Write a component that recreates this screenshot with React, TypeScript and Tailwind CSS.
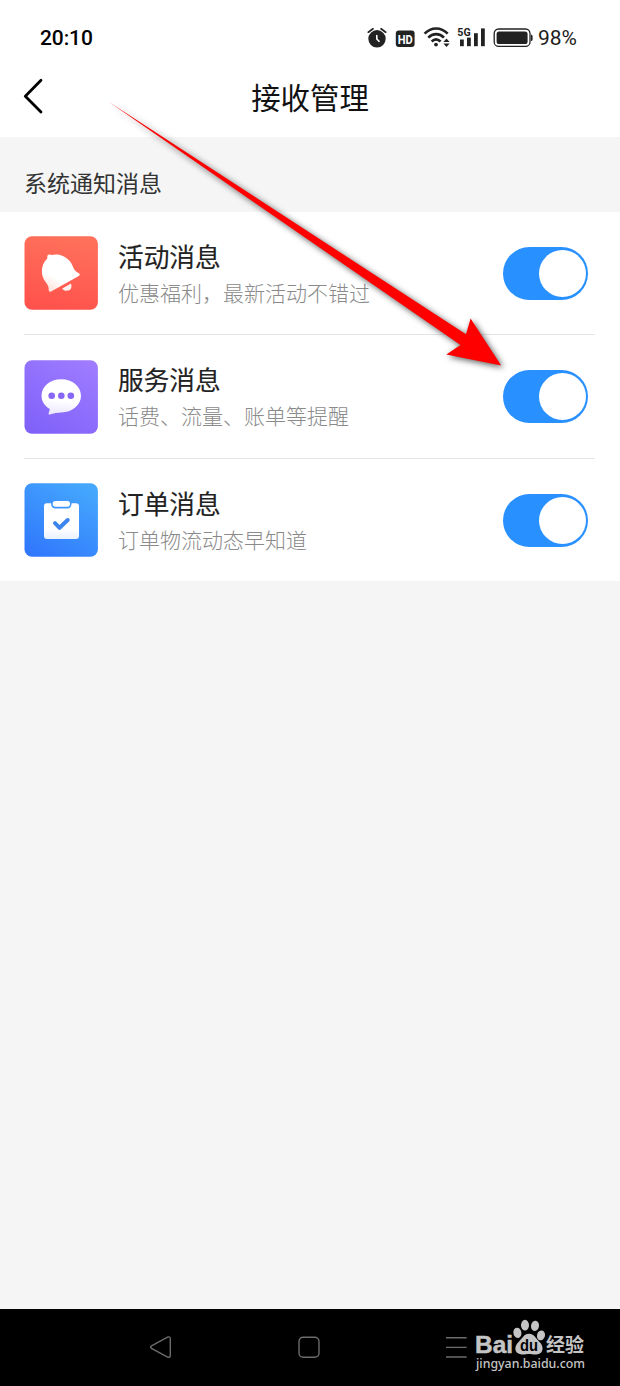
import { useState } from 'react';
import type { ReactNode } from 'react';

type MessageItem = {
  id: string;
  title: string;
  desc: string;
  icon: ReactNode;
};

function BellIcon() {
  return (
    <svg viewBox="0 0 74 74" className="w-[74px] h-[74px] shrink-0">
      <defs>
        <linearGradient id="bell-bg" x1="0.6" y1="0" x2="0.4" y2="1">
          <stop offset="0" stopColor="#ff715b" />
          <stop offset="1" stopColor="#ff524c" />
        </linearGradient>
        <linearGradient id="bell-fg" x1="0.6" y1="0.2" x2="0.2" y2="0.9">
          <stop offset="0" stopColor="#fff" />
          <stop offset="0.6" stopColor="#fff" />
          <stop offset="1" stopColor="#ffe6e2" />
        </linearGradient>
      </defs>
      <rect x="0.5" y="0.3" width="73.4" height="73.4" rx="7.5" fill="url(#bell-bg)" />
      <path
        d="M23.3 20.2C23.2 18.5 26.3 17.7 27.7 19.1C36 16.9 44.8 21.6 48.3 29.2C50 32.9 50.7 34.8 53.6 36.5L55.3 37.6C56.1 38.4 55.7 39.4 54.8 39.9L27.1 55.4C25.8 56.1 24.6 55.4 24.7 53.9C24.9 50.2 23.4 48.3 21 45.2C16.2 38.6 16.9 28.2 23.3 22.4Z"
        fill="url(#bell-fg)"
      />
      <path d="M38.3 52.4L47 47.4C48.3 51.8 46.6 54.4 43.6 54.6C41.3 54.9 39.2 54.3 38.3 52.4Z" fill="#fff1ef" />
    </svg>
  );
}

function ChatIcon() {
  return (
    <svg viewBox="0 0 74 74" className="w-[74px] h-[74px] shrink-0">
      <defs>
        <linearGradient id="chat-bg" x1="0.8" y1="0" x2="0.2" y2="1">
          <stop offset="0" stopColor="#9e7bff" />
          <stop offset="1" stopColor="#8062fa" />
        </linearGradient>
        <linearGradient id="chat-fg" x1="0.5" y1="0" x2="0.4" y2="1">
          <stop offset="0.6" stopColor="#fff" />
          <stop offset="1" stopColor="#ebe6ff" />
        </linearGradient>
      </defs>
      <rect x="0.5" y="0.3" width="73.4" height="73.4" rx="7.5" fill="url(#chat-bg)" />
      <path
        d="M37.2 19.3C48.4 19.3 57 26.6 57 35.8C57 45.1 48.3 52.5 37.2 52.5C33.6 52.5 29.8 53.2 25.7 54.5C24.7 54.8 24.3 53.9 24.7 53L25.9 49.1C20.8 46.2 17.5 41.4 17.5 35.8C17.5 26.6 26 19.3 37.2 19.3Z"
        fill="url(#chat-fg)"
      />
      <circle cx="27.7" cy="35.8" r="3.3" fill="#8767f5" />
      <circle cx="37.3" cy="35.8" r="3.3" fill="#8767f5" />
      <circle cx="46.8" cy="35.8" r="3.3" fill="#8767f5" />
    </svg>
  );
}

function OrderIcon() {
  return (
    <svg viewBox="0 0 74 74" className="w-[74px] h-[74px] shrink-0">
      <defs>
        <linearGradient id="order-bg" x1="0.8" y1="0" x2="0.2" y2="1">
          <stop offset="0" stopColor="#45a8fd" />
          <stop offset="1" stopColor="#3178fd" />
        </linearGradient>
        <linearGradient id="order-fg" x1="0" y1="0" x2="0" y2="1">
          <stop offset="0.7" stopColor="#fff" />
          <stop offset="1" stopColor="#e8f1ff" />
        </linearGradient>
      </defs>
      <rect x="0.5" y="0.3" width="73.4" height="73.4" rx="7.5" fill="url(#order-bg)" />
      <path
        d="M22.6 20.2H27C27.1 23.4 28.7 25.6 31.4 25.6H43.3C46 25.6 47.5 23.4 47.6 20.2H52Q55 20.2 55 23.2V53Q55 56 52 56H23Q20 56 20 53V23.2Q20 20.2 22.6 20.2Z"
        fill="url(#order-fg)"
      />
      <rect x="28.7" y="18" width="17.3" height="5.7" rx="2.6" fill="#fff" />
      <path d="M31 40.2L35.6 44.8L43.7 37" fill="none" stroke="#3d85ee" strokeWidth="4" strokeLinecap="round" strokeLinejoin="round" />
    </svg>
  );
}

const MESSAGES: MessageItem[] = [
  { id: 'activity', title: '活动消息', desc: '优惠福利，最新活动不错过', icon: <BellIcon /> },
  { id: 'service', title: '服务消息', desc: '话费、流量、账单等提醒', icon: <ChatIcon /> },
  { id: 'order', title: '订单消息', desc: '订单物流动态早知道', icon: <OrderIcon /> },
];

function StatusBar() {
  return (
    <div className="h-14 pl-10 pr-[43px] pt-[18px] flex items-center justify-between text-[#1c1c1c] font-['Roboto','Noto_Sans_CJK_SC',sans-serif]">
      <span className="pt-[3px] text-[21px] leading-none font-medium tracking-[-0.1px] text-black">20:10</span>
      <div className="flex items-center gap-[5px]">
        <svg viewBox="367 25 166 24" className="w-[166px] h-6" fill="#222">
          {/* alarm */}
          <circle cx="377" cy="38.8" r="8.7" />
          <path d="M368.3 32.2L373 28.8M385.7 32.2L381 28.8" stroke="#222" strokeWidth="1.7" strokeLinecap="round" />
          <path d="M376.8 35.5V39L379 41.3" fill="none" stroke="#fff" strokeWidth="1.6" strokeLinecap="round" />
          {/* HD */}
          <rect x="395.8" y="30.5" width="18.8" height="16.6" rx="3" />
          <text x="405.2" y="43.5" textAnchor="middle" fontSize="13" fontWeight="700" fill="#fff" textLength="15" lengthAdjust="spacingAndGlyphs">HD</text>
          {/* wifi */}
          <g fill="none" stroke="#222" strokeWidth="2.6">
            <path d="M424.6 33.7C431.2 26.7 441.1 26.7 447.7 33.7" />
            <path d="M428.3 37.7C432.8 32.9 439.5 32.9 444 37.7" />
            <path d="M431.7 41.5C434.3 38.8 437.7 38.8 440.6 41.5" />
          </g>
          <circle cx="436" cy="44.6" r="1.9" />
          <path d="M446.5 38.6L449.6 41.9H443.4ZM446.5 46.9L449.6 43.6H443.4Z" />
          {/* signal */}
          <text x="457.3" y="35.8" fontSize="11.5" fontWeight="700" textLength="13.3" lengthAdjust="spacingAndGlyphs">5G</text>
          <rect x="460" y="39.5" width="3.8" height="6.7" />
          <rect x="467" y="37.6" width="3.8" height="8.6" />
          <rect x="474" y="33.2" width="3.8" height="13" />
          <rect x="481" y="28.4" width="3.8" height="17.8" />
          {/* battery */}
          <rect x="494.2" y="29" width="35.8" height="17.4" rx="4.5" fill="none" stroke="#222" strokeWidth="1.3" />
          <rect x="496.6" y="31.4" width="31" height="12.6" rx="2.6" />
          <path d="M530.8 34.4Q532.6 34.4 532.6 36V39.4Q532.6 41 530.8 41Z" />
        </svg>
        <span className="pt-[3px] text-[21px] leading-none">98%</span>
      </div>
    </div>
  );
}

function Toggle({ on, onChange }: { on: boolean; onChange: () => void }) {
  return (
    <button
      type="button"
      role="switch"
      aria-checked={on}
      onClick={onChange}
      className={`w-[85px] h-[53px] shrink-0 rounded-full px-[2px] flex items-center ${on ? 'bg-[#2890ff] justify-end' : 'bg-gray-200 justify-start'}`}
    >
      <span className="size-[47px] rounded-full bg-white" />
    </button>
  );
}

function NavBar() {
  return (
    <div className="h-[77px] bg-black flex items-center">
      <svg viewBox="0 0 470 77" className="w-[470px] h-[77px] shrink-0" fill="none" stroke="#6c6c6c" strokeWidth="1.4">
        <path d="M151.5 36.8L167.6 28.2Q170.3 27 170.3 29.8V46.4Q170.3 49.2 167.6 48L151.5 39.4Q149.6 38.1 151.5 36.8Z" />
        <rect x="299" y="28.3" width="20" height="20" rx="4.2" />
        <path d="M446 28.8H466.6M446 38.4H466.6M446 48H466.6" />
      </svg>
      <Watermark />
    </div>
  );
}

function Watermark() {
  return (
    <svg viewBox="470 1309 150 77" className="w-[150px] h-[77px] shrink-0" fill="#c4c4c4">
      <text x="475" y="1353" fontSize="23.5" fontWeight="700" textLength="38" lengthAdjust="spacingAndGlyphs" stroke="#c4c4c4" strokeWidth="0.5" className="font-['Liberation_Sans',sans-serif]">Bai</text>
      <ellipse cx="517.4" cy="1332.8" rx="4" ry="5.2" transform="rotate(-12 517.4 1332.8)" />
      <ellipse cx="525" cy="1325.2" rx="4" ry="5.4" />
      <ellipse cx="535" cy="1325.9" rx="4" ry="5.2" transform="rotate(10 535 1325.9)" />
      <ellipse cx="541" cy="1335.4" rx="4" ry="5" transform="rotate(14 541 1335.4)" />
      <path d="M529 1333.8C534 1333.8 535.5 1338 539 1341.5C544.5 1346 543.8 1354.3 536.2 1354.5C533 1354.6 531.5 1353.9 529 1353.9C526.5 1353.9 524.5 1354.7 521.5 1354.4C513.8 1353.8 513.8 1346 518.8 1341.8C522.5 1338.2 524 1333.8 529 1333.8Z" />
      <text x="529" y="1351.3" textAnchor="middle" fontSize="16" fontWeight="700" fill="#000" textLength="18" lengthAdjust="spacingAndGlyphs" className="font-['Liberation_Sans',sans-serif]">du</text>
      <text x="546" y="1352.3" fontSize="19" fontWeight="700" textLength="38" lengthAdjust="spacingAndGlyphs" className="font-['Noto_Sans_CJK_SC',sans-serif]">经验</text>
      <text x="476" y="1368" fontSize="13" textLength="109" lengthAdjust="spacingAndGlyphs" className="font-['Noto_Sans',sans-serif] font-medium">jingyan.baidu.com</text>
    </svg>
  );
}

function PointerArrow() {
  return (
    <svg viewBox="0 0 620 400" className="absolute left-0 top-0 w-[620px] h-[400px] pointer-events-none">
      <path
        d="M109 102L466 334.3L470.6 318.5L501.2 365.6L446.3 354.6L460.5 345Z"
        fill="#fe0000"
        className="drop-shadow-[2px_2px_3px_rgba(0,0,0,0.65)]"
      />
    </svg>
  );
}

export default function App() {
  const [enabled, setEnabled] = useState<Record<string, boolean>>({ activity: true, service: true, order: true });

  const toggle = (id: string) => setEnabled((prev) => ({ ...prev, [id]: !prev[id] }));

  return (
    <div className="relative w-[620px] h-[1386px] overflow-hidden flex flex-col bg-[#f5f5f5] font-['Noto_Sans_CJK_SC',sans-serif]">
      <header className="h-[137px] bg-white">
        <StatusBar />
        <div className="h-[81px] px-[22px] grid grid-cols-[40px_1fr_40px] items-center">
          <button type="button" aria-label="返回">
            <svg viewBox="0 0 24 38" className="w-6 h-[38px]" fill="none" stroke="#000" strokeWidth="2.8" strokeLinecap="round" strokeLinejoin="round">
              <path d="M19 2.2L3.3 18.2L19 34" />
            </svg>
          </button>
          <h1 className="text-center text-[29.4px] leading-none text-[#111]">接收管理</h1>
        </div>
      </header>

      <h2 className="h-[75px] pl-6 pt-[33px] text-[23px] leading-[24px] text-[#333]">系统通知消息</h2>

      <div className="bg-white h-[369px] pl-6 pr-[25px]">
        {MESSAGES.map((item) => (
          <div key={item.id} className="h-[123.4px] pr-[7px] flex items-center border-b border-[#e4e4e4] last:border-b-0">
            {item.icon}
            <div className="ml-5 pt-px pb-0.5 flex-1 whitespace-nowrap">
              <div className="text-[25.7px] leading-[36px] text-[#222] [-webkit-text-stroke:0.15px_#222]">{item.title}</div>
              <div className="mt-0.5 text-[21px] leading-[32px] text-[#8a8a8a] font-light">{item.desc}</div>
            </div>
            <Toggle on={enabled[item.id]} onChange={() => toggle(item.id)} />
          </div>
        ))}
      </div>

      <div className="flex-1" />
      <NavBar />
      <PointerArrow />
    </div>
  );
}
